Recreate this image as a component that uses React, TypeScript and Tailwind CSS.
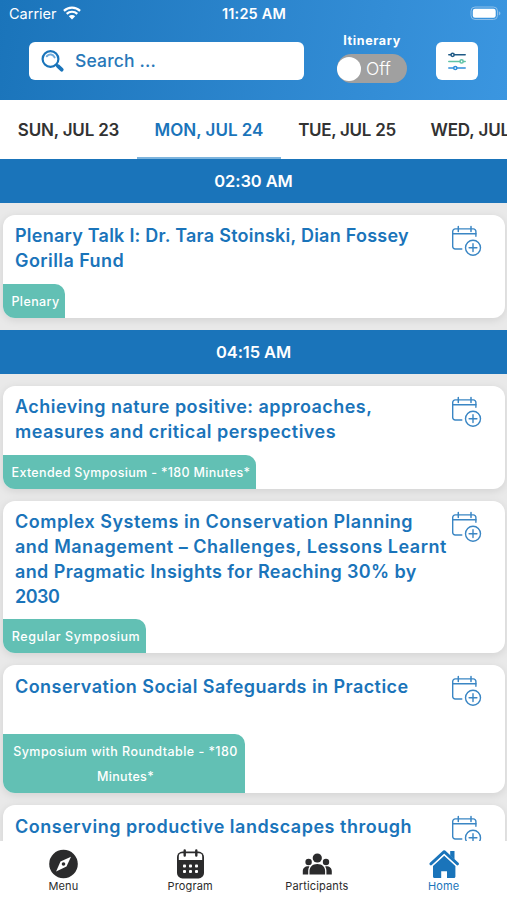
import clsx from "clsx"

type Line = { text: string; tracking?: string }

type Session = {
  title: Line[]
  tag?: Line[]
  tagWidth?: string
}

const days = [
  { label: "SUN, JUL 23", width: "w-[137px]", tracking: "tracking-[-0.2px]", active: false },
  { label: "MON, JUL 24", width: "w-[144px]", tracking: "tracking-normal", active: true },
  { label: "TUE, JUL 25", width: "w-[132px]", tracking: "tracking-[-0.3px]", active: false },
  { label: "WED, JUL 26", width: "w-[140px]", tracking: "tracking-[-0.1px]", active: false },
]

const morning: Session[] = [
  {
    title: [
      { text: "Plenary Talk I: Dr. Tara Stoinski, Dian Fossey", tracking: "tracking-[0.24px]" },
      { text: "Gorilla Fund", tracking: "tracking-[0.42px]" },
    ],
    tag: [{ text: "Plenary", tracking: "tracking-[0.4px]" }],
    tagWidth: "w-[62px]",
  },
]

const later: Session[] = [
  {
    title: [
      { text: "Achieving nature positive: approaches,", tracking: "tracking-[0.46px]" },
      { text: "measures and critical perspectives", tracking: "tracking-[0.5px]" },
    ],
    tag: [{ text: "Extended Symposium - *180 Minutes*", tracking: "tracking-[0.33px]" }],
    tagWidth: "w-[253px]",
  },
  {
    title: [
      { text: "Complex Systems in Conservation Planning", tracking: "tracking-[0.49px]" },
      { text: "and Management – Challenges, Lessons Learnt", tracking: "tracking-[0.51px]" },
      { text: "and Pragmatic Insights for Reaching 30% by", tracking: "tracking-[0.38px]" },
      { text: "2030", tracking: "tracking-[-0.5px]" },
    ],
    tag: [{ text: "Regular Symposium", tracking: "tracking-[0.55px]" }],
    tagWidth: "w-[143px]",
  },
  {
    title: [{ text: "Conservation Social Safeguards in Practice", tracking: "tracking-[0.44px]" }],
    tag: [
      { text: "Symposium with Roundtable - *180", tracking: "tracking-[0.45px]" },
      { text: "Minutes*", tracking: "tracking-[0.35px]" },
    ],
    tagWidth: "w-[242px]",
  },
  {
    title: [{ text: "Conserving productive landscapes through", tracking: "tracking-[0.52px]" }],
  },
]

function WifiIcon() {
  return (
    <svg className="mb-0.5" width="18" height="14" viewBox="0 0 18 14" fill="none" stroke="white" strokeWidth="2.2">
      <path d="M0.9 4.9a11.6 11.6 0 0 1 16.2 0" />
      <path d="M3.7 7.9a7.6 7.6 0 0 1 10.6 0" />
      <path d="M9 13.6 5.8 10.3a4.6 4.6 0 0 1 6.4 0z" fill="white" stroke="none" />
    </svg>
  )
}

function BatteryIcon() {
  return (
    <svg className="mb-0.5" width="31" height="15" viewBox="0 0 31 15">
      <rect x="1" y="1" width="26.5" height="12.5" rx="4" fill="none" stroke="#8dbfe9" strokeWidth="1" />
      <rect x="2.8" y="2.8" width="22.9" height="8.9" rx="2.2" fill="white" />
      <path d="M28.8 5.2v4.2c1.2-.5 1.6-1.2 1.6-2.1s-.4-1.6-1.6-2.1z" fill="#8dbfe9" />
    </svg>
  )
}

function SearchIcon() {
  return (
    <svg width="24" height="24" viewBox="0 0 24 24" fill="none">
      <circle cx="9.5" cy="10" r="7.9" stroke="#1a74ba" strokeWidth="2.2" />
      <path d="M5.8 7.2c2.5-2.6 6.2-2.2 7.8 1.2" stroke="#6fabdc" strokeWidth="2" strokeLinecap="round" />
      <path d="m15.2 15.6 2 2" stroke="#1a74ba" strokeWidth="2.4" />
      <path d="m17 17.2 3.7 3.5" stroke="#1a74ba" strokeWidth="3.8" strokeLinecap="round" />
    </svg>
  )
}

function FilterIcon() {
  return (
    <svg width="20" height="20" viewBox="0 0 18 20" fill="none" strokeWidth="1.5" strokeLinecap="round">
      <g stroke="#1f5a86">
        <path d="M.8 3.8h2.2M6.2 3.8h11" />
        <circle cx="4.6" cy="3.8" r="1.6" />
      </g>
      <g stroke="#5fc3a6">
        <path d="M.8 10.4h11M15.400 10.4h1.8" />
        <circle cx="13.6" cy="10.4" r="1.6" />
      </g>
      <g stroke="#2f8fda">
        <path d="M.8 17h4.800M9 17h8.2" />
        <circle cx="7.3" cy="17" r="1.6" />
      </g>
    </svg>
  )
}

function AddToCalendar() {
  return (
    <svg className="shrink-0" width="32" height="32" viewBox="0 0 32 32" fill="none" stroke="#3a86c4" strokeWidth="1.4" strokeLinecap="round">
      <path d="M10.8 25H4.200a2.500 2.500 0 0 1-2.500-2.500V7.400a2.500 2.500 0 0 1 2.500-2.500h18.200A2.500 2.500 0 0 1 24.900 7.400v4.800" />
      <path d="M1.700 9.700h23.200" />
      <path d="M7.300 2.600v5M20 2.600v5" strokeWidth="1.500" />
      <circle cx="22" cy="23.700" r="7.500" />
      <path d="M22 19.800v7.800M18.100 23.700h7.800" />
    </svg>
  )
}

function SessionCard({ title, tag, tagWidth }: Session) {
  return (
    <article className="flex flex-col overflow-hidden rounded-xl bg-white shadow-[0_2px_8px_rgba(0,0,0,0.1)]">
      <div className="flex justify-between pt-[9px] pr-[22px] pl-3">
        <h2 className="min-h-[60px] pt-[0.4px] pb-[9.6px] text-lg leading-[24.8px] font-semibold text-[#1a74ba]">
          {title.map((line) => (
            <span key={line.text} className={clsx("block whitespace-nowrap", line.tracking)}>
              {line.text}
            </span>
          ))}
        </h2>
        <AddToCalendar />
      </div>
      {tag && (
        <div className={clsx("flex flex-col items-center rounded-tr-[10px] bg-[#62c0b4] pt-[5px] pb-1 pl-[3px] text-[12.5px] leading-[25px] font-medium text-white", tagWidth)}>
          {tag.map((line) => (
            <span key={line.text} className={clsx("block whitespace-nowrap", line.tracking)}>
              {line.text}
            </span>
          ))}
        </div>
      )}
    </article>
  )
}

function TimeBand({ time }: { time: string }) {
  return (
    <div className="flex h-11 shrink-0 items-center justify-center bg-[#1a74ba] text-[16.5px] font-semibold tracking-[-0.1px] text-white">
      {time}
    </div>
  )
}

function CompassIcon() {
  return (
    <svg width="30" height="30" viewBox="0 0 30 30">
      <circle cx="15.5" cy="15" r="14.3" fill="#2b2b2c" />
      <path d="M23 7.7 18.5 17.5 8.1 22.5 12.5 12.5z" fill="white" />
      <circle cx="15.5" cy="15" r="1.8" fill="#2b2b2c" />
    </svg>
  )
}

function ProgramIcon() {
  return (
    <svg width="30" height="30" viewBox="0 0 30 30" fill="none">
      <rect x="2" y="2.6" width="27" height="26.8" rx="5.5" fill="#2b2b2c" />
      <path d="M3.8 11V7.500A3.200 3.200 0 0 1 7 4.300h17a3.200 3.200 0 0 1 3.200 3.200V11z" fill="white" />
      <path d="M9.7 1.5v5M21.3 1.5v5" stroke="#2b2b2c" strokeWidth="2.4" strokeLinecap="round" />
      <g fill="white">
        {[17, 22.5].map((y) => [9.5, 15.5, 21.5].map((x) => <rect key={`${x}-${y}`} x={x - 1.5} y={y - 1.5} width="3" height="3" rx=".9" />))}
      </g>
    </svg>
  )
}

function PeopleIcon() {
  return (
    <svg width="30" height="30" viewBox="0 0 30 30" fill="#2b2b2c">
      <circle cx="15.300" cy="9" r="4.600" />
      <circle cx="6.600" cy="13" r="3.200" />
      <circle cx="24" cy="13" r="3.200" />
      <path d="M7.500 25.500v-3.600c0-4.200 3-7 7.800-7s7.800 2.800 7.800 7v3.600z" />
      <path d="M.8 25.500v-3.300c0-3 2.300-5.200 6.600-4.800-.8 1.300-1.200 2.700-1.200 4.200v3.900z" />
      <path d="M29.800 25.500v-3.300c0-3-2.300-5.200-6.600-4.800.8 1.300 1.200 2.700 1.200 4.200v3.900z" />
    </svg>
  )
}

function HomeIcon() {
  return (
    <svg width="30" height="30" viewBox="0 0 30 30" fill="#1a74ba">
      <path d="M21.2 2h4.3v8.500l-4.300-3.900z" />
      <path d="m1.900 14.900 13.300-12.300 13.300 12.300" fill="none" stroke="#1a74ba" strokeWidth="2.800" strokeLinecap="round" strokeLinejoin="round" />
      <path d="M15.200 6.800 4 17v10.500c0 .9.600 1.500 1.400 1.500h6.800v-6.700h5.800V29H25c.8 0 1.400-.6 1.400-1.500V17z" />
      <path d="m3.300 16.600 11.900-11 11.900 11" fill="none" stroke="white" strokeWidth=".9" />
    </svg>
  )
}

const tabs = [
  { label: "Menu", icon: CompassIcon },
  { label: "Program", icon: ProgramIcon },
  { label: "Participants", icon: PeopleIcon },
  { label: "Home", icon: HomeIcon, active: true },
]

export default function App() {
  return (
    <div className="flex h-[900px] w-[507px] flex-col overflow-hidden bg-[#e9e9e9] font-['Inter',sans-serif]">
      <header className="h-[100px] shrink-0 bg-linear-100 from-[#1a74ba] to-[#3b96e0] text-white">
        <div className="grid h-7 grid-cols-3 items-center pr-[6px] pl-[9px]">
          <div className="flex items-center gap-[6px] text-[14.5px]">
            Carrier
            <WifiIcon />
          </div>
          <div className="pr-[2px] text-center text-[14.5px] font-semibold tracking-[0.2px]">11:25 AM</div>
          <div className="flex justify-end">
            <BatteryIcon />
          </div>
        </div>
        <div className="flex pl-[29px]">
          <div className="mt-[14px] flex h-[38px] w-[275px] items-center rounded-md bg-white pl-3 text-[17.5px] font-medium tracking-[0.15px] text-[#2878b9]">
            <SearchIcon />
            <span className="ml-[10px]">Search ...</span>
          </div>
          <div className="ml-[33px] flex w-[70px] flex-col items-center pt-[4px]">
            <span className="text-[12.5px] leading-[18px] font-bold tracking-[0.65px]">Itinerary</span>
            <div className="mt-[4px] flex h-[29px] w-[70px] items-center rounded-full bg-[#a0a0a0]">
              <span className="size-6 rounded-full bg-white" />
              <span className="ml-[5px] pt-px text-[17.5px] font-light">Off</span>
            </div>
          </div>
          <button className="mt-[14px] ml-[29px] flex h-[38px] w-[42px] items-center justify-center rounded-md bg-white">
            <FilterIcon />
          </button>
        </div>
      </header>

      <nav className="flex h-[59px] shrink-0 bg-white text-[17px] font-semibold whitespace-nowrap text-[#323232]">
        {days.map((day) => (
          <div
            key={day.label}
            className={clsx(
              "flex shrink-0 items-center justify-center border-b-2 pt-[4px]",
              day.width,
              day.tracking,
              day.active ? "border-[#7db4dd] text-[#1a74ba]" : "border-transparent",
            )}
          >
            {day.label}
          </div>
        ))}
      </nav>

      <main className="flex min-h-0 flex-1 flex-col overflow-hidden">
        <TimeBand time="02:30 AM" />
        <div className="flex flex-col gap-3 py-3 pr-[2px] pl-[3px]">
          {morning.map((session) => (
            <SessionCard key={session.title[0].text} {...session} />
          ))}
        </div>
        <TimeBand time="04:15 AM" />
        <div className="flex flex-col gap-3 py-3 pr-[2px] pl-[3px]">
          {later.map((session) => (
            <SessionCard key={session.title[0].text} {...session} />
          ))}
        </div>
      </main>

      <footer className="grid h-[59px] shrink-0 grid-cols-4 bg-white">
        {tabs.map(({ label, icon: Icon, active }) => (
          <div
            key={label}
            className={clsx("flex flex-col items-center pt-[8px] text-[11px] leading-[15px] tracking-[0.15px]", active ? "text-[#1a74ba]" : "text-[#2b2b2c]")}
          >
            <Icon />
            {label}
          </div>
        ))}
      </footer>
    </div>
  )
}
